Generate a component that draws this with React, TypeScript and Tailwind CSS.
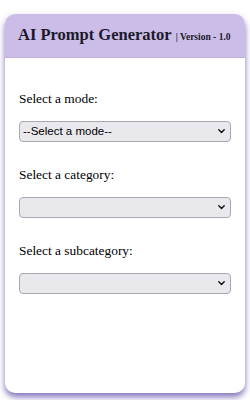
import React, { useState } from 'react';

const serif = { fontFamily: '"Liberation Serif", "Times New Roman", serif' };

type FieldProps = {
  label: string;
  options: string[];
  value: string;
  onChange: (v: string) => void;
};

const Field: React.FC<FieldProps> = ({ label, options, value, onChange }) => (
  <div className="flex flex-col">
    <label className="block text-[13.4px] leading-[16px] text-black" style={serif}>
      {label}
    </label>
    <div className="relative mt-[14px] h-[21px]">
      <select
        value={value}
        onChange={(e) => onChange(e.target.value)}
        className="block h-full w-full appearance-none rounded-[4px] border border-[#a9a8b3] bg-[#e9e9ed] pl-[3px] pr-6 text-[11.5px] leading-none text-black outline-none"
        style={{ fontFamily: '"Liberation Sans", Arial, sans-serif' }}
      >
        {options.map((o) => (
          <option key={o} value={o}>
            {o}
          </option>
        ))}
      </select>
      {/* chevron */}
      <svg
        className="pointer-events-none absolute right-[6px] top-[8px]"
        width="7"
        height="5"
        viewBox="0 0 7 5"
        fill="none"
      >
        <path d="M0.8 0.8 L3.5 3.6 L6.2 0.8" stroke="#111" strokeWidth="1.4" strokeLinecap="round" strokeLinejoin="round" />
      </svg>
    </div>
  </div>
);

export default function App() {
  const [mode, setMode] = useState('--Select a mode--');
  const [category, setCategory] = useState('');
  const [subcategory, setSubcategory] = useState('');

  return (
    <div className="h-[400px] w-[250px] bg-white pt-[14px] px-[5px]">
      <div className="flex h-[379px] flex-col overflow-hidden rounded-[10px] bg-white shadow-[0_4px_6px_rgba(110,90,175,0.85)]">
        {/* header */}
        <div className="flex h-[44px] items-center border-b border-[#bfb3d6] bg-[#cbbde8] pl-[13px]" style={serif}>
          <h1 className="text-[16.5px] font-bold text-[#1c1a2b]">AI Prompt Generator</h1>
          <span className="ml-[4px] mt-[3px] text-[9.5px] font-bold text-[#1c1a2b]">| Version - 1.0</span>
        </div>

        {/* body */}
        <div className="flex flex-col gap-[25px] px-[14px] pt-[33px]">
          <Field
            label="Select a mode:"
            options={['--Select a mode--', 'Text', 'Image']}
            value={mode}
            onChange={setMode}
          />
          <Field label="Select a category:" options={['']} value={category} onChange={setCategory} />
          <Field label="Select a subcategory:" options={['']} value={subcategory} onChange={setSubcategory} />
        </div>
      </div>
    </div>
  );
}
